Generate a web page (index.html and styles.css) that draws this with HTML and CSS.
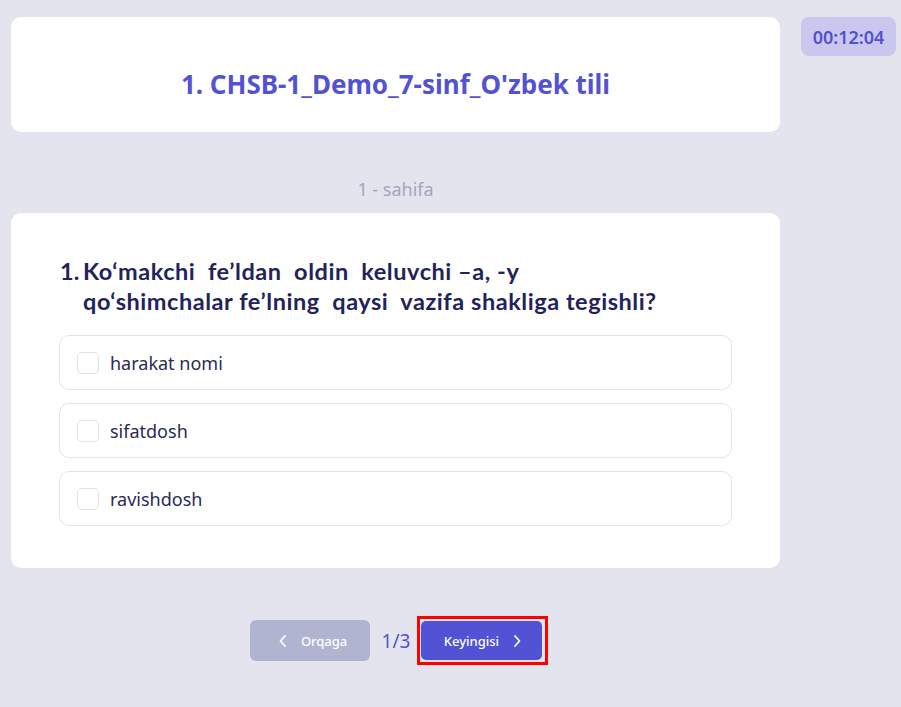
FILE: index.html
```html
<!DOCTYPE html>
<html>
<head>
<meta charset="utf-8">
<link rel="stylesheet" href="styles.css">
</head>
<body>
<div class="page">
  <main class="main">
    <section class="title-card">
      <h1 class="title">1. CHSB-1_Demo_7-sinf_O'zbek tili</h1>
    </section>
    <div class="page-label">1 - sahifa</div>
    <section class="question-card">
      <div class="question">
        <span class="q-num">1.</span>
        <span class="q-text">Ko‘makchi&nbsp; fe’ldan&nbsp; oldin&nbsp; keluvchi –a, -y<br>qo‘shimchalar fe’lning&nbsp; qaysi&nbsp; vazifa shakliga tegishli?</span>
      </div>
      <div class="options">
        <label class="option"><span class="box"></span><span class="opt-text">harakat nomi</span></label>
        <label class="option"><span class="box"></span><span class="opt-text">sifatdosh</span></label>
        <label class="option"><span class="box"></span><span class="opt-text">ravishdosh</span></label>
      </div>
    </section>
    <nav class="pager">
      <button class="btn btn-prev">
        <svg width="10" height="14" viewBox="0 0 10 14"><path d="M7 2 L2.5 7 L7 12" fill="none" stroke="#fff" stroke-width="1.8" stroke-linecap="round" stroke-linejoin="round"/></svg>
        <span>Orqaga</span>
      </button>
      <span class="count">1/3</span>
      <span class="focus-ring">
        <button class="btn btn-next">
          <span>Keyingisi</span>
          <svg width="10" height="14" viewBox="0 0 10 14"><path d="M3 2 L7.5 7 L3 12" fill="none" stroke="#fff" stroke-width="1.8" stroke-linecap="round" stroke-linejoin="round"/></svg>
        </button>
      </span>
    </nav>
  </main>
  <aside class="side">
    <div class="timer">00:12:04</div>
  </aside>
</div>
</body>
</html>
```
FILE: styles.css
```css
html, body {
  margin: 0;
  padding: 0;
  background: #e4e4ee;
  font-family: "Noto Sans", "Open Sans", sans-serif;
}
.page {
  display: flex;
  align-items: flex-start;
  padding: 17px 5px 0 11px;
  gap: 21px;
  height: 707px;
  box-sizing: border-box;
}
.main {
  width: 769px;
  display: flex;
  flex-direction: column;
}
.side {
  width: 95px;
}
.timer {
  height: 39px;
  background: #c9c7ee;
  border-radius: 8px;
  color: #5252cc;
  font-weight: 600;
  font-size: 18px;
  display: flex;
  align-items: center;
  justify-content: center;
}
.title-card {
  height: 115px;
  box-sizing: border-box;
  padding-top: 18px;
  background: #fff;
  border-radius: 10px;
  display: flex;
  align-items: center;
  justify-content: center;
}
.title {
  margin: 0;
  font-size: 26px;
  font-weight: 700;
  color: #5353d2;
}
.page-label {
  text-align: center;
  margin-top: 46px;
  height: 22px;
  line-height: 22px;
  font-size: 18px;
  color: #a5a5c0;
}
.question-card {
  margin-top: 13px;
  background: #fff;
  border-radius: 10px;
  padding: 43px 48px 42px 48px;
}
.question {
  display: flex;
  font-family: Lato, "Noto Sans", sans-serif;
  font-weight: 700;
  font-size: 23.5px;
  letter-spacing: 0.55px;
  line-height: 30px;
  color: #22235a;
  padding-left: 1px;
}
.q-num {
  width: 23px;
  flex: none;
  letter-spacing: 0;
}
.options {
  margin-top: 19px;
  display: flex;
  flex-direction: column;
  gap: 13px;
}
.option {
  height: 55px;
  box-sizing: border-box;
  border: 1px solid #e2e2ee;
  border-radius: 10px;
  display: flex;
  align-items: center;
  padding-left: 17px;
  gap: 11px;
}
.box {
  width: 22px;
  height: 22px;
  box-sizing: border-box;
  border: 1px solid #e0e0ec;
  border-radius: 5px;
}
.opt-text {
  font-size: 18px;
  color: #2a2a58;
}
.pager {
  margin-top: 48px;
  display: flex;
  align-items: center;
  justify-content: center;
  gap: 12px;
  padding-left: 7px;
}
.btn {
  border: none;
  font-family: "Noto Sans", sans-serif;
  font-size: 13px;
  font-weight: 500;
  color: #fff;
  display: flex;
  align-items: center;
  gap: 13px;
  cursor: pointer;
}
.btn-prev {
  width: 120px;
  height: 41px;
  background: #b0b4d0;
  border-radius: 6px;
  justify-content: center;
  padding: 0 0 0 6px;
}
.count {
  font-size: 19px;
  color: #5353d2;
}
.focus-ring {
  display: inline-flex;
  border: 3px solid #ff0000;
  padding: 2px 3px 2px 1px;
  margin-left: -5px;
}
.btn-next {
  width: 121px;
  height: 39px;
  background: #5252d4;
  border-radius: 5px;
  justify-content: center;
  padding: 0 0 0 2px;
}
```
